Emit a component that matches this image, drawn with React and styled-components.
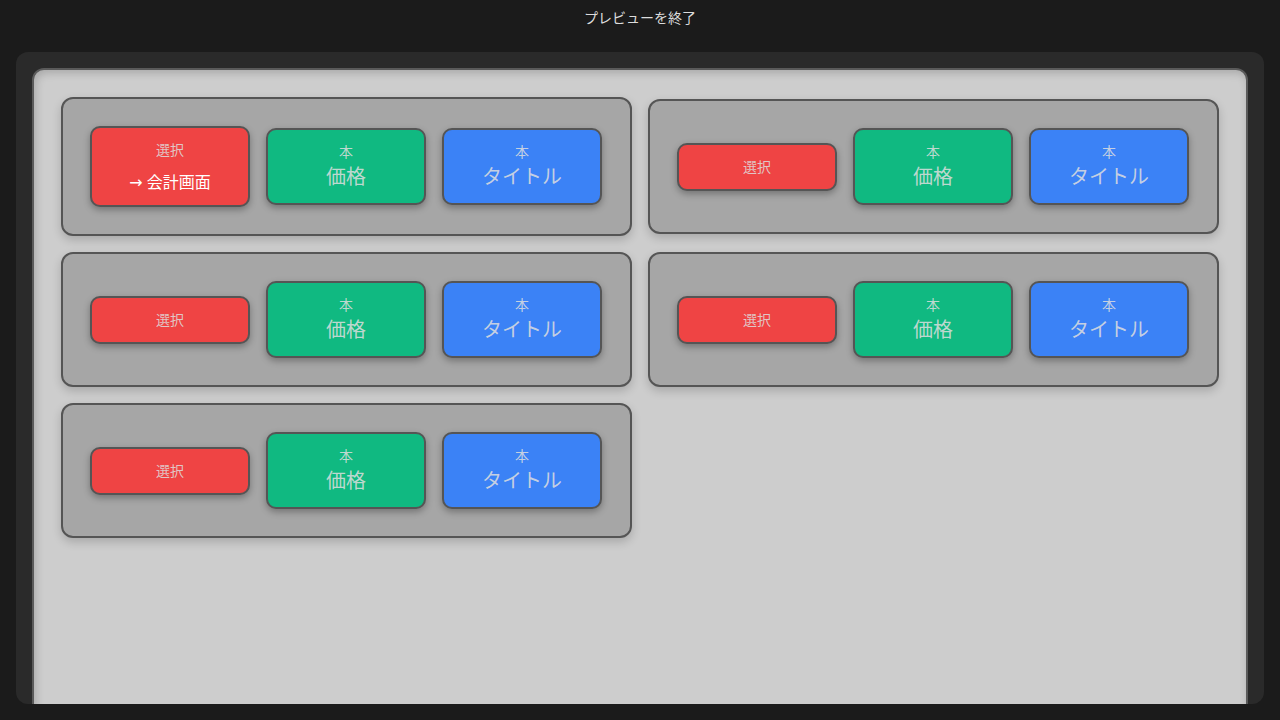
import styled, { createGlobalStyle } from 'styled-components'

const GlobalStyle = createGlobalStyle`
    html, body {
        margin: 0;
        padding: 0;
        background: #1b1b1b;
        font-family: "Noto Sans", "DejaVu Sans", "Noto Sans CJK JP", sans-serif;
    }
`

const Page = styled.div`
    height: 100vh;
    display: flex;
    flex-direction: column;
    box-sizing: border-box;
`

const TopBar = styled.div`
    height: 36px;
    line-height: 36px;
    text-align: center;
    font-size: 14px;
    color: #dcdcdc;
`

const Frame = styled.div`
    flex: 1;
    margin: 16px 16px 16px;
    padding: 16px 16px 0;
    background: #2a2a2a;
    border-radius: 12px;
    overflow: hidden;
    display: flex;
    flex-direction: column;
`

const Screen = styled.div`
    flex: 1;
    margin-bottom: -20px;
    background: #cdcdcd;
    border: 2px solid #5a5a5a;
    border-radius: 12px 12px 0 0;
    box-shadow: inset 2px 3px 8px rgba(0, 0, 0, 0.18);
`

const Grid = styled.div`
    display: grid;
    grid-template-columns: 1fr 1fr;
    gap: 16px;
    align-items: center;
    padding: 27px;
`

const Card = styled.div`
    display: flex;
    align-items: center;
    gap: 16px;
    padding: 27px 28px 27px 27px;
    background: #a6a6a6;
    border: 2px solid #555;
    border-radius: 12px;
    box-shadow: 0 4px 10px rgba(0, 0, 0, 0.18);
`

const colors = {
    red: '#ef4444',
    green: '#10b981',
    blue: '#3b82f6',
}

const Tile = styled.div`
    flex: 1 1 0;
    min-width: 0;
    display: flex;
    flex-direction: column;
    align-items: center;
    justify-content: center;
    gap: ${(p) => (p.$gap ? p.$gap : 0)}px;
    padding: 12px 8px;
    background: ${(p) => colors[p.$color]};
    border: 2px solid #555;
    border-radius: 10px;
    box-shadow: 0 3px 7px rgba(0, 0, 0, 0.3);
`

const Small = styled.span`
    font-size: 14px;
    line-height: 20px;
    color: rgba(222, 222, 222, 0.85);
`

const Big = styled.span`
    font-size: 20px;
    line-height: 29px;
    color: rgba(222, 222, 222, 0.85);
`

const Checkout = styled.span`
    font-size: 16px;
    line-height: 22px;
    color: #fff;
`

const items = [
    { id: 1, selected: true },
    { id: 2 },
    { id: 3 },
    { id: 4 },
    { id: 5 },
]

function BookCard({ selected }) {
    return (
        <Card>
            <Tile $color="red" $gap={selected ? 11 : 0}>
                <Small>選択</Small>
                {selected && <Checkout>→ 会計画面</Checkout>}
            </Tile>
            <Tile $color="green">
                <Small>本</Small>
                <Big>価格</Big>
            </Tile>
            <Tile $color="blue">
                <Small>本</Small>
                <Big>タイトル</Big>
            </Tile>
        </Card>
    )
}

function App() {
    return (
        <Page>
            <GlobalStyle />
            <TopBar>プレビューを終了</TopBar>
            <Frame>
                <Screen>
                    <Grid>
                        {items.map((item) => (
                            <BookCard key={item.id} selected={item.selected} />
                        ))}
                    </Grid>
                </Screen>
            </Frame>
        </Page>
    )
}

export default App;
